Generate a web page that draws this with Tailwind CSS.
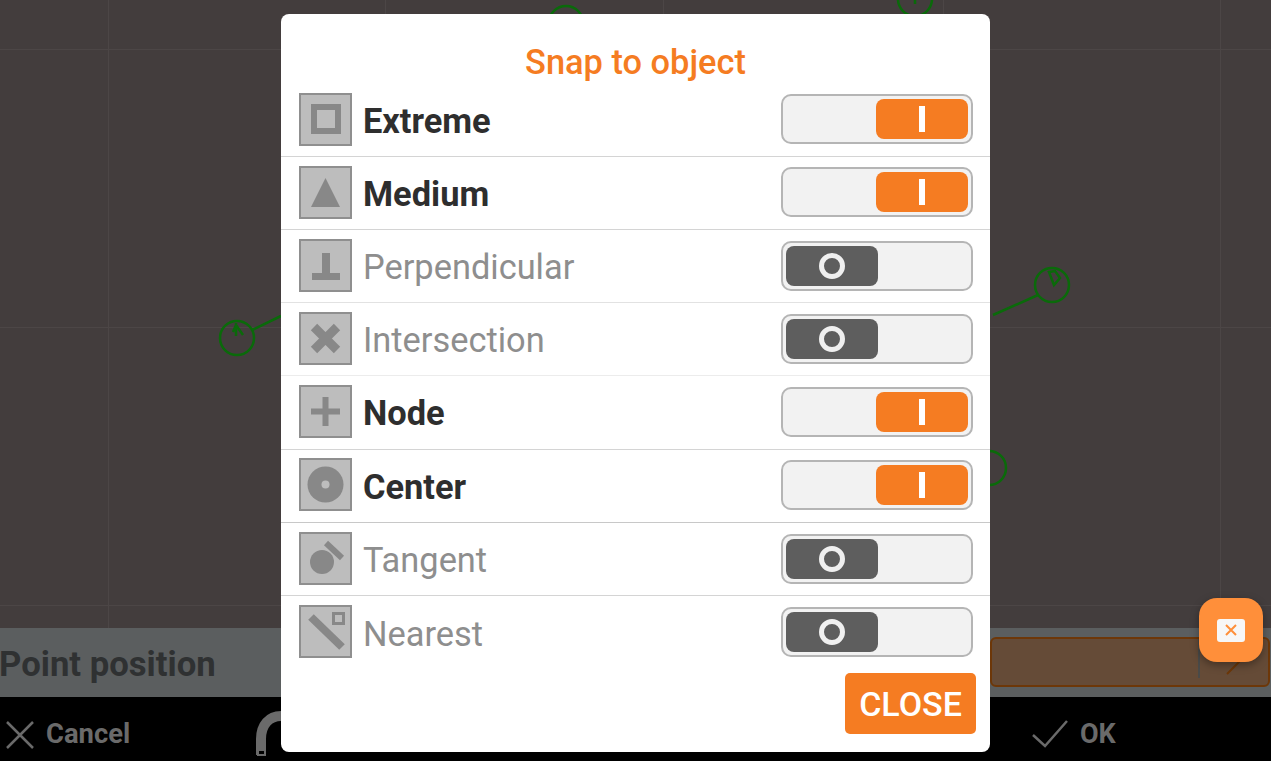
<!DOCTYPE html>
<html lang="en">
<head>
<meta charset="utf-8">
<title>Snap to object</title>
<script src="https://cdn.jsdelivr.net/npm/@tailwindcss/browser@4"></script>
</head>
<body class="m-0 overflow-hidden">
<div class="relative w-[1271px] h-[761px] overflow-hidden flex flex-col bg-black font-['Roboto',sans-serif]">
  <!-- drawing canvas -->
  <div class="relative h-[628px] bg-[#433d3d] overflow-hidden">
    <svg class="absolute inset-0" width="1271" height="628" viewBox="0 0 1271 628" fill="none">
      <g stroke="#4c4646" stroke-width="1">
        <path d="M108.500 0V628M385.500 0V628M663.500 0V628M943.500 0V628M1220.500 0V628M0 49.500H1271M0 327.500H1271M0 605.500H1271"/>
      </g>
      <g stroke="#0a6a0a" stroke-width="2.500">
        <circle cx="237" cy="338" r="17"/>
        <path d="M252 330L281 316M236 323V336M236 325L233 332M236 325L243 335"/>
        <circle cx="1052" cy="285" r="17"/>
        <path d="M1038 295L993 315M1049 272L1054 285L1060 278L1055 271Z"/>
        <circle cx="566" cy="23" r="17"/>
        <circle cx="915" cy="-1" r="17"/>
        <path d="M915 0V4"/>
        <circle cx="989" cy="468" r="17"/>
      </g>
    </svg>
  </div>
  <!-- point position bar -->
  <div class="h-[69px] bg-[#5b5e5f] flex items-center justify-between">
    <span class="text-[34.700px] leading-none font-bold text-[#2f3132] mt-[4px] -ml-[1px]">Point position</span>
    <div class="relative w-[280px] h-[50px] mr-[1px] mt-[-1px] bg-[#654b37] border-2 border-[#6d3708] rounded-[6px]">
      <div class="absolute left-[206px] top-0 bottom-[7px] w-[2px] bg-[#4a4a48]"></div>
      <svg class="absolute left-[234px] top-[20px]" width="16" height="16" viewBox="0 0 16 16" fill="none"><path d="M1 15L14 2" stroke="#6d3708" stroke-width="2"/></svg>
    </div>
  </div>
  <!-- bottom toolbar -->
  <div class="relative flex-1 bg-black text-[#6a6a6a] flex items-center">
    <div class="flex items-center ml-[5px] mt-[12px]">
      <svg width="30" height="30" viewBox="0 0 30 30" fill="none"><path d="M2 2L28 28M28 2L2 28" stroke="#6a6a6a" stroke-width="2.500"/></svg>
      <span class="ml-[11px] text-[27.400px] leading-none font-bold">Cancel</span>
    </div>
    <svg class="ml-[125px] mt-[12px]" width="42" height="48" viewBox="0 0 42 48" fill="none">
      <path d="M6 44V28C6 14 14 5 26 5H42" stroke="#6a6a6a" stroke-width="10"/>
      <rect x="3" y="39" width="7" height="5" fill="#000" stroke="#6a6a6a" stroke-width="2"/>
    </svg>
    <div class="absolute left-[1032px] top-[22px] flex items-center">
      <svg width="36" height="30" viewBox="0 0 36 30" fill="none"><path d="M1 16L13 27L35 2" stroke="#6a6a6a" stroke-width="2.500"/></svg>
      <span class="ml-[12px] text-[27px] leading-none font-bold">OK</span>
    </div>
  </div>

  <!-- floating action -->
  <div class="absolute left-[1199px] top-[598px] w-[64px] h-[64px] rounded-[18px] bg-[#ff8f3a] shadow-[0_3px_8px_rgba(0,0,0,0.35)] flex items-center justify-center">
    <div class="w-[28px] h-[23px] rounded-[3px] bg-[#f7f7f7] flex items-center justify-center">
      <svg width="12" height="12" viewBox="0 0 12 12" fill="none"><path d="M1 1L11 11M11 1L1 11" stroke="#ff8f3a" stroke-width="2"/></svg>
    </div>
  </div>

  <!-- dialog -->
  <div class="absolute left-[281px] top-[14px] w-[709px] h-[738px] bg-white rounded-[8px] flex flex-col">
    <div class="h-[70px] flex items-center justify-center pt-[27px] text-[34.400px] leading-none font-medium text-[#f57c22]">Snap to object</div>

    <div class="h-[73.100px] pb-[2px] border-b border-[#d4d4d4] flex items-center pl-[18px] pr-[17px]">
      <svg width="53" height="53" viewBox="0 0 53 53" fill="none" class="shrink-0">
        <rect x="1" y="1" width="51" height="51" fill="#bdbdbd" stroke="#8f8f8f" stroke-width="2"/>
        <rect x="15" y="14" width="24" height="24" stroke="#888888" stroke-width="6"/>
      </svg>
      <span class="ml-[11px] mt-[4px] flex-1 text-[34.400px] leading-none font-bold text-[#2e2e2e]">Extreme</span>
      <div class="w-[192px] h-[50px] rounded-[10px] border-2 border-[#b5b5b5] bg-[#f2f2f2] flex items-center justify-end pr-[3px]">
        <div class="w-[92px] h-[40px] rounded-[8px] bg-[#f57c22] flex items-center justify-center"><div class="w-[6px] h-[26px] bg-white"></div></div>
      </div>
    </div>

    <div class="h-[73.100px] pb-[2px] border-b border-[#d4d4d4] flex items-center pl-[18px] pr-[17px]">
      <svg width="53" height="53" viewBox="0 0 53 53" fill="none" class="shrink-0">
        <rect x="1" y="1" width="51" height="51" fill="#bdbdbd" stroke="#8f8f8f" stroke-width="2"/>
        <path d="M26.500 12L41 41H12Z" fill="#888888"/>
      </svg>
      <span class="ml-[11px] mt-[4px] flex-1 text-[34.400px] leading-none font-bold text-[#2e2e2e]">Medium</span>
      <div class="w-[192px] h-[50px] rounded-[10px] border-2 border-[#b5b5b5] bg-[#f2f2f2] flex items-center justify-end pr-[3px]">
        <div class="w-[92px] h-[40px] rounded-[8px] bg-[#f57c22] flex items-center justify-center"><div class="w-[6px] h-[26px] bg-white"></div></div>
      </div>
    </div>

    <div class="h-[73.100px] pb-[2px] border-b border-[#e2e2e2] flex items-center pl-[18px] pr-[17px]">
      <svg width="53" height="53" viewBox="0 0 53 53" fill="none" class="shrink-0">
        <rect x="1" y="1" width="51" height="51" fill="#bdbdbd" stroke="#8f8f8f" stroke-width="2"/>
        <path d="M23 14H31V34H41V41H13V34H23Z" fill="#888888"/>
      </svg>
      <span class="ml-[11px] mt-[4px] flex-1 text-[34.400px] leading-none font-normal text-[#8e8e8e]">Perpendicular</span>
      <div class="w-[192px] h-[50px] mt-[2px] rounded-[10px] border-2 border-[#b5b5b5] bg-[#f2f2f2] flex items-center pl-[3px]">
        <div class="w-[92px] h-[40px] rounded-[8px] bg-[#5e5e5e] flex items-center justify-center"><div class="w-[26px] h-[26px] rounded-full border-[5px] border-[#f0f0f0]"></div></div>
      </div>
    </div>

    <div class="h-[73.100px] pb-[2px] border-b border-[#ececec] flex items-center pl-[18px] pr-[17px]">
      <svg width="53" height="53" viewBox="0 0 53 53" fill="none" class="shrink-0">
        <rect x="1" y="1" width="51" height="51" fill="#bdbdbd" stroke="#8f8f8f" stroke-width="2"/>
        <path d="M15 15L38 38M38 15L15 38" stroke="#888888" stroke-width="9"/>
      </svg>
      <span class="ml-[11px] mt-[4px] flex-1 text-[34.400px] leading-none font-normal text-[#8e8e8e]">Intersection</span>
      <div class="w-[192px] h-[50px] mt-[2px] rounded-[10px] border-2 border-[#b5b5b5] bg-[#f2f2f2] flex items-center pl-[3px]">
        <div class="w-[92px] h-[40px] rounded-[8px] bg-[#5e5e5e] flex items-center justify-center"><div class="w-[26px] h-[26px] rounded-full border-[5px] border-[#f0f0f0]"></div></div>
      </div>
    </div>

    <div class="h-[73.400px] pb-[2px] border-b border-[#d4d4d4] flex items-center pl-[18px] pr-[17px]">
      <svg width="53" height="53" viewBox="0 0 53 53" fill="none" class="shrink-0">
        <rect x="1" y="1" width="51" height="51" fill="#bdbdbd" stroke="#8f8f8f" stroke-width="2"/>
        <path d="M26.500 12V41M12 26.500H41" stroke="#888888" stroke-width="6"/>
      </svg>
      <span class="ml-[11px] mt-[4px] flex-1 text-[34.400px] leading-none font-bold text-[#2e2e2e]">Node</span>
      <div class="w-[192px] h-[50px] rounded-[10px] border-2 border-[#b5b5b5] bg-[#f2f2f2] flex items-center justify-end pr-[3px]">
        <div class="w-[92px] h-[40px] rounded-[8px] bg-[#f57c22] flex items-center justify-center"><div class="w-[6px] h-[26px] bg-white"></div></div>
      </div>
    </div>

    <div class="h-[73.200px] pb-[2px] border-b border-[#c8c8c8] flex items-center pl-[18px] pr-[17px]">
      <svg width="53" height="53" viewBox="0 0 53 53" fill="none" class="shrink-0">
        <rect x="1" y="1" width="51" height="51" fill="#bdbdbd" stroke="#8f8f8f" stroke-width="2"/>
        <circle cx="26.500" cy="26.500" r="18" fill="#888888"/>
        <circle cx="26.500" cy="26.500" r="4" fill="#bdbdbd"/>
      </svg>
      <span class="ml-[11px] mt-[4px] flex-1 text-[34.400px] leading-none font-bold text-[#2e2e2e]">Center</span>
      <div class="w-[192px] h-[50px] rounded-[10px] border-2 border-[#b5b5b5] bg-[#f2f2f2] flex items-center justify-end pr-[3px]">
        <div class="w-[92px] h-[40px] rounded-[8px] bg-[#f57c22] flex items-center justify-center"><div class="w-[6px] h-[26px] bg-white"></div></div>
      </div>
    </div>

    <div class="h-[73.200px] pb-[2px] border-b border-[#d4d4d4] flex items-center pl-[18px] pr-[17px]">
      <svg width="53" height="53" viewBox="0 0 53 53" fill="none" class="shrink-0">
        <rect x="1" y="1" width="51" height="51" fill="#bdbdbd" stroke="#8f8f8f" stroke-width="2"/>
        <circle cx="23" cy="30" r="12" fill="#888888"/>
        <path d="M27 11L43 26" stroke="#888888" stroke-width="6"/>
      </svg>
      <span class="ml-[11px] mt-[4px] flex-1 text-[34.400px] leading-none font-normal text-[#8e8e8e]">Tangent</span>
      <div class="w-[192px] h-[50px] mt-[2px] rounded-[10px] border-2 border-[#b5b5b5] bg-[#f2f2f2] flex items-center pl-[3px]">
        <div class="w-[92px] h-[40px] rounded-[8px] bg-[#5e5e5e] flex items-center justify-center"><div class="w-[26px] h-[26px] rounded-full border-[5px] border-[#f0f0f0]"></div></div>
      </div>
    </div>

    <div class="h-[73.200px] pb-[2px] flex items-center pl-[18px] pr-[17px]">
      <svg width="53" height="53" viewBox="0 0 53 53" fill="none" class="shrink-0">
        <rect x="1" y="1" width="51" height="51" fill="#bdbdbd" stroke="#8f8f8f" stroke-width="2"/>
        <path d="M12 12L43 42" stroke="#888888" stroke-width="8"/>
        <rect x="34.500" y="8.500" width="10" height="10" stroke="#888888" stroke-width="3"/>
      </svg>
      <span class="ml-[11px] mt-[4px] flex-1 text-[34.400px] leading-none font-normal text-[#8e8e8e]">Nearest</span>
      <div class="w-[192px] h-[50px] rounded-[10px] border-2 border-[#b5b5b5] bg-[#f2f2f2] flex items-center pl-[3px]">
        <div class="w-[92px] h-[40px] rounded-[8px] bg-[#5e5e5e] flex items-center justify-center"><div class="w-[26px] h-[26px] rounded-full border-[5px] border-[#f0f0f0]"></div></div>
      </div>
    </div>

    <div class="flex justify-end pr-[14px] pt-[4px]">
      <div class="w-[131px] h-[61px] rounded-[5px] bg-[#f57c22] text-white text-[34px] leading-none font-medium flex items-center justify-center">CLOSE</div>
    </div>
  </div>
</div>
</body>
</html>
